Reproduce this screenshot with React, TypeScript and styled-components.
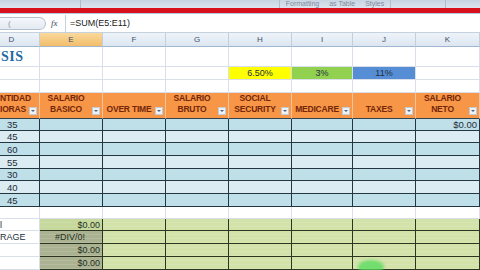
import React from 'react';
import styled, { createGlobalStyle } from 'styled-components';

const GlobalStyle = createGlobalStyle`
	html, body {
		margin: 0;
		padding: 0;
		background: #ffffff;
		overflow: hidden;
	}
	body {
		font-family: 'Liberation Sans', Arial, sans-serif;
	}
`;

const COLS = '40px 63px 63px 63px 63px 61px 63px 64px';

const Window = styled.div`
	width: 480px;
	height: 270px;
	display: flex;
	flex-direction: column;
	overflow: hidden;
	position: relative;
`;

const Ribbon = styled.div`
	height: 9px;
	background: linear-gradient(#c9d4e2, #dbe4ef);
	display: flex;
	align-items: flex-end;
	font-size: 7px;
	color: #7d8a9b;
	overflow: hidden;
`;

const RibbonGroup = styled.div<{ $w: number }>`
	width: ${(p) => p.$w}px;
	flex-shrink: 0;
	height: 9px;
	border-right: 1px solid #aebdcf;
	display: flex;
	align-items: flex-end;
	justify-content: center;
	gap: 10px;
	white-space: nowrap;
	line-height: 8px;
`;

const RedBar = styled.div`
	height: 5px;
	background: #d8101c;
	border-bottom: 1px solid #b5cbe4;
`;

const FormulaBar = styled.div`
	height: 19px;
	background: #ffffff;
	display: flex;
	align-items: center;
	border-bottom: 1px solid #c5d1de;
`;

const NameBox = styled.div`
	width: 46px;
	height: 13px;
	border: 1px solid #b4c0ce;
	border-left: none;
	border-radius: 0 7px 7px 0;
	background: linear-gradient(#f4f7fb, #e4eaf2);
	display: flex;
	align-items: center;
	padding-left: 8px;
	box-sizing: border-box;
	color: #8d98a6;
	font-size: 8px;
`;

const Fx = styled.div`
	width: 14px;
	margin-left: 5px;
	font-family: 'Liberation Serif', serif;
	font-style: italic;
	font-size: 9px;
	color: #3a4656;
	border-right: 1px solid #c5d1de;
	height: 17px;
	display: flex;
	align-items: center;
`;

const Formula = styled.div`
	margin-left: 4px;
	font-size: 9px;
	color: #1b1b1b;
`;

const Row = styled.div<{ $h: number }>`
	display: grid;
	grid-template-columns: ${COLS};
	height: ${(p) => p.$h}px;
	flex-shrink: 0;
`;

const Letter = styled.div<{ $active?: boolean; $first?: boolean }>`
	background: ${(p) =>
		p.$active ? 'linear-gradient(#f9d99b, #f2bd6b)' : 'linear-gradient(#eef3f9, #dde6f1)'};
	border-right: 1px solid #c4cfdd;
	border-bottom: 1px solid #9eb6ce;
	font-size: 8px;
	color: #3d4f66;
	display: flex;
	align-items: center;
	justify-content: center;
	padding-right: ${(p) => (p.$first ? '16px' : '0')};
`;

const Plain = styled.div<{ $bg?: string; $align?: string }>`
	background: ${(p) => p.$bg || '#ffffff'};
	border-right: 1px solid #d9dfe8;
	border-bottom: 1px solid #d9dfe8;
	font-size: 9px;
	color: #243040;
	display: flex;
	align-items: center;
	justify-content: ${(p) => p.$align || 'center'};
	overflow: hidden;
	white-space: nowrap;
`;

const Title = styled.div`
	font-family: 'Liberation Serif', serif;
	font-weight: bold;
	font-size: 14px;
	color: #1f6ba5;
	margin-left: 1px;
	letter-spacing: 0.5px;
`;

const Head = styled.div<{ $cut?: boolean }>`
	background: #f79646;
	border-right: 1px solid #f6c39a;
	border-bottom: 1px solid #33424c;
	position: relative;
	display: flex;
	flex-direction: column;
	justify-content: flex-end;
	align-items: ${(p) => (p.$cut ? 'flex-start' : 'center')};
	padding: ${(p) => (p.$cut ? '0 4px 3px 0' : '0 10px 3px 0')};
	box-sizing: border-box;
	font-size: 8.5px;
	line-height: 11px;
	font-weight: bold;
	letter-spacing: -0.2px;
	color: #74260a;
	white-space: nowrap;
`;

const Filter = styled.div`
	position: absolute;
	right: 2px;
	bottom: 3px;
	width: 8px;
	height: 8px;
	background: #eef1f5;
	border: 1px solid #c2cad4;
	box-sizing: border-box;
	display: flex;
	align-items: center;
	justify-content: center;
	&::after {
		content: '';
		border-left: 2px solid transparent;
		border-right: 2px solid transparent;
		border-top: 2px solid #4b6585;
	}
`;

const Data = styled.div<{ $bg: string; $align?: string }>`
	background: ${(p) => p.$bg};
	border-right: 1px solid #243640;
	border-bottom: 1px solid #243640;
	font-size: 9.5px;
	color: #1f2c38;
	display: flex;
	align-items: center;
	justify-content: ${(p) => p.$align || 'flex-start'};
	padding: 0 2px 0 7px;
	box-sizing: border-box;
	overflow: hidden;
	white-space: nowrap;
`;

const Total = styled.div<{ $bg: string; $align?: string }>`
	background: ${(p) => p.$bg};
	border-right: 1px solid #2c3520;
	border-bottom: 1px solid #2c3520;
	font-size: 9px;
	color: #25301c;
	display: flex;
	align-items: center;
	justify-content: ${(p) => p.$align || 'flex-start'};
	padding: 0 2px 0 0;
	box-sizing: border-box;
	overflow: hidden;
	white-space: nowrap;
	background-image: repeating-linear-gradient(
		transparent 0 3px,
		rgba(255, 255, 255, 0.12) 3px 4px
	);
`;

const Glow = styled.div`
	position: absolute;
	left: 358px;
	top: 260px;
	width: 26px;
	height: 14px;
	border-radius: 50%;
	background: rgba(80, 220, 90, 0.75);
	filter: blur(1.5px);
`;

const letters = ['D', 'E', 'F', 'G', 'H', 'I', 'J', 'K'];

const headers: [string, string][] = [
	['NTIDAD', 'IORAS'],
	['SALARIO', 'BASICO'],
	['', 'OVER TIME'],
	['SALARIO', 'BRUTO'],
	['SOCIAL', 'SECURITY'],
	['', 'MEDICARE'],
	['', 'TAXES'],
	['SALARIO', 'NETO'],
];

const hours = [35, 45, 60, 55, 30, 40, 45];
const rowHeights = [13, 12, 13, 13, 12, 13, 13];

const totals = [
	{ label: 'l', value: '$0.00' },
	{ label: 'RAGE', value: '#DIV/0!' },
	{ label: '', value: '$0.00' },
	{ label: '', value: '$0.00' },
];

const App = (): JSX.Element => {
	return (
		<Window>
			<GlobalStyle />
			<Ribbon>
				<RibbonGroup $w={80} />
				<RibbonGroup $w={198} />
				<RibbonGroup $w={110}>
					<span>Formatting</span>
					<span>as Table</span>
					<span>Styles</span>
				</RibbonGroup>
				<RibbonGroup $w={54} />
				<RibbonGroup $w={38} />
			</Ribbon>
			<RedBar />
			<FormulaBar>
				<NameBox>(</NameBox>
				<Fx>fx</Fx>
				<Formula>=SUM(E5:E11)</Formula>
			</FormulaBar>
			<Row $h={14}>
				{letters.map((l) => (
					<Letter key={l} $active={l === 'E'} $first={l === 'D'}>
						{l}
					</Letter>
				))}
			</Row>
			<Row $h={20}>
				<Plain $align="flex-start">
					<Title>SIS</Title>
				</Plain>
				{letters.slice(1).map((l) => (
					<Plain key={l} />
				))}
			</Row>
			<Row $h={13}>
				<Plain />
				<Plain />
				<Plain />
				<Plain />
				<Plain $bg="#ffff00">6.50%</Plain>
				<Plain $bg="#92d050">3%</Plain>
				<Plain $bg="#558ed5">11%</Plain>
				<Plain />
			</Row>
			<Row $h={13}>
				{letters.map((l) => (
					<Plain key={l} />
				))}
			</Row>
			<Row $h={25}>
				{headers.map(([a, b], i) => (
					<Head key={i} $cut={i === 0}>
						{a && <span>{a}</span>}
						<span>{b}</span>
						<Filter />
					</Head>
				))}
			</Row>
			{hours.map((h, r) => {
				const bg = r % 2 === 0 ? '#bfdfe9' : '#dbedf3';
				return (
					<Row key={r} $h={rowHeights[r]}>
						<Data $bg={bg}>{h}</Data>
						{letters.slice(1).map((l) => (
							<Data key={l} $bg={bg} $align="flex-end">
								{l === 'K' && r === 0 ? '$0.00' : ''}
							</Data>
						))}
					</Row>
				);
			})}
			<Row $h={12}>
				{letters.map((l) => (
					<Plain key={l} />
				))}
			</Row>
			{totals.map((t, r) => (
				<Row key={r} $h={r === 0 ? 12 : 13}>
					<Plain $align="flex-start">{t.label}</Plain>
					<Total
						$bg={r === 0 ? '#c6d89c' : '#aab292'}
						$align={t.value.startsWith('#') ? 'center' : 'flex-end'}
					>
						{t.value}
					</Total>
					{letters.slice(2).map((l) => (
						<Total key={l} $bg="#d2e2a8" />
					))}
				</Row>
			))}
			<Glow />
		</Window>
	);
};

export default App;
